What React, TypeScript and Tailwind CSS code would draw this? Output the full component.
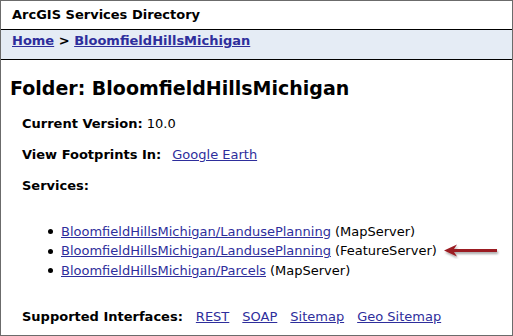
const linkCls = 'text-[#2e2e9c] underline'

function Arrow() {
  return (
    <svg width="58" height="16" viewBox="0 0 58 16" className="ml-[6px]">
      <defs>
        <filter id="sh" x="-20%" y="-50%" width="140%" height="200%">
          <feDropShadow dx="1" dy="2" stdDeviation="1.2" floodColor="#000" floodOpacity="0.35" />
        </filter>
      </defs>
      <g filter="url(#sh)">
        <path d="M1 7.5 L14 1.5 L11 6 L54 6 L54 9 L11 9 L14 13.5 Z" fill="#9b1c24" />
      </g>
    </svg>
  )
}

const services = [
  { name: 'BloomfieldHillsMichigan/LandusePlanning', type: 'MapServer' },
  { name: 'BloomfieldHillsMichigan/LandusePlanning', type: 'FeatureServer', marked: true },
  { name: 'BloomfieldHillsMichigan/Parcels', type: 'MapServer' },
]

export default function App() {
  return (
    <div
      className="flex h-[336px] w-[513px] flex-col border border-[#6b6b6b] bg-white text-[13px] leading-[16px] text-black"
      style={{ fontFamily: '"DejaVu Sans", Verdana, sans-serif' }}
    >
      <div className="flex h-[29px] items-center border-b border-black px-[11px] font-bold">
        ArcGIS Services Directory
      </div>
      <div className="h-[30px] border-b border-black bg-[#e5ecf5] px-[11px] pt-[3px] font-bold">
        <a className={linkCls}>Home</a> &gt; <a className={linkCls}>BloomfieldHillsMichigan</a>
      </div>

      <div className="flex flex-col px-[9px] pt-[16px]">
        <h2 className="text-[19px] font-bold leading-[24px]">Folder: BloomfieldHillsMichigan</h2>

        <div className="mt-[16px] flex flex-col gap-[15px] pl-[12px]">
          <p>
            <b>Current Version:</b> 10.0
          </p>
          <p className="flex gap-[11px]">
            <b>View Footprints In:</b>
            <a className={linkCls}>Google Earth</a>
          </p>
          <p>
            <b>Services:</b>
          </p>
        </div>

        <ul className="mt-[28px] flex flex-col pl-[38px]">
          {services.map((s, i) => (
            <li key={i} className="flex h-[19.5px] items-center">
              <span className="mr-[8px] inline-block h-[5px] w-[5px] rounded-full bg-black" />
              <a className={linkCls}>{s.name}</a>
              <span className="ml-[4px]">({s.type})</span>
              {s.marked && <Arrow />}
            </li>
          ))}
        </ul>

        <p className="mt-[28px] flex gap-[13px] pl-[12px]">
          <b>Supported Interfaces:</b>
          <a className={linkCls}>REST</a>
          <a className={linkCls}>SOAP</a>
          <a className={linkCls}>Sitemap</a>
          <a className={linkCls}>Geo Sitemap</a>
        </p>
      </div>
    </div>
  )
}
